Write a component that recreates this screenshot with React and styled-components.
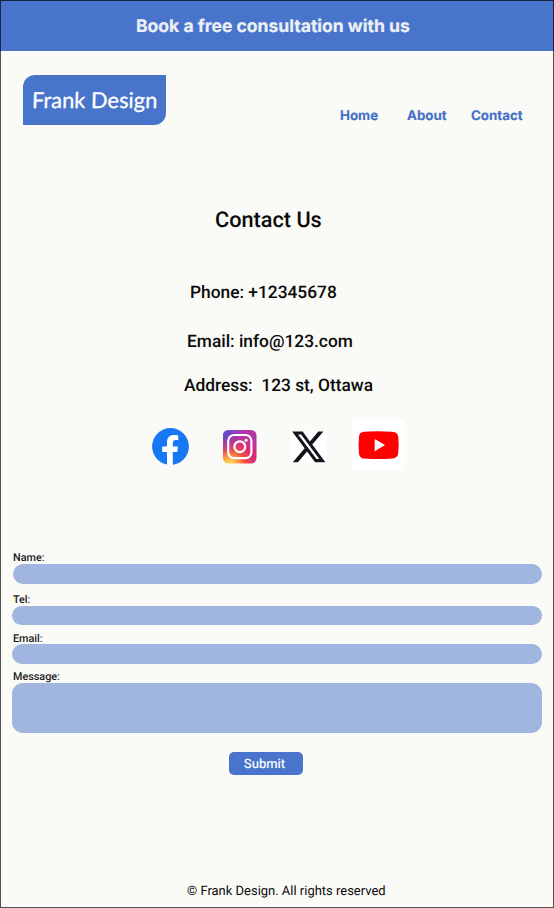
import React from "react";
import styled, { createGlobalStyle } from "styled-components";

const GlobalStyle = createGlobalStyle`
  * { box-sizing: border-box; }
  body { margin: 0; background: #fafbf6; }
`;

const Page = styled.div`
  position: relative;
  display: flex;
  flex-direction: column;
  width: 554px;
  height: 908px;
  overflow: hidden;
  background: #fafbf6;
  color: #0a0a0a;
  font-family: Roboto, sans-serif;
  text-rendering: geometricPrecision;

  &::after {
    content: "";
    position: absolute;
    inset: 0;
    border: 1px solid rgba(0, 0, 0, 0.68);
    pointer-events: none;
  }
`;

const Banner = styled.div`
  flex: none;
  height: 51px;
  padding: 1px 0 0 136px;
  background: #4874cb;
  color: #ecf0f4;
  font: 700 17.55px/52px Inter, sans-serif;
  -webkit-text-stroke: 0.2px #ecf0f4;
  white-space: nowrap;
`;

const Header = styled.header`
  flex: none;
  display: flex;
  justify-content: space-between;
  align-items: flex-end;
  height: 74px;
  padding: 0 31px 0 23px;
`;

const Logo = styled.div`
  width: 143px;
  height: 50px;
  padding-left: 9px;
  border-radius: 12px 0 12px 0;
  background: #4874cb;
  color: #fff;
  font: 400 21.9px/49px Lato, sans-serif;
  -webkit-text-stroke: 0.3px #fff;
  white-space: nowrap;
`;

const Wordmark = styled.span`
  display: inline-block;
  transform: skewX(-1.5deg);
`;

const Nav = styled.nav`
  display: flex;
  width: 183px;
`;

const NavLink = styled.a`
  width: ${(p) => p.$width}px;
  height: 20px;
  color: #4470c9;
  font: 700 13.3px/22px Inter, sans-serif;
  -webkit-text-stroke: 0.15px #4470c9;
  white-space: nowrap;
`;

const Contact = styled.section`
  flex: none;
  display: flex;
  flex-direction: column;
  height: 295px;
  padding-top: 81px;
`;

const Title = styled.h1`
  margin: 0 0 45px 215px;
  font-size: 21.7px;
  font-weight: 500;
  line-height: 30px;
`;

const ContactLine = styled.p`
  margin: 0 0 ${(p) => p.$gap}px ${(p) => p.$left}px;
  font-size: 17.33px;
  font-weight: 500;
  line-height: 24px;
  white-space: pre;
`;

const Socials = styled.div`
  display: flex;
  align-items: center;
  height: 50px;
  margin: 22px 0 0 152px;
`;

const SocialIcon = styled.svg`
  flex: none;
  display: block;
  margin-right: ${(p) => p.$gap || 0}px;
  margin-top: ${(p) => p.$drop || 0}px;
`;

const Form = styled.form`
  flex: none;
  display: flex;
  flex-direction: column;
  padding: 130px 12px 0 12px;
`;

const Field = styled.label`
  display: flex;
  flex-direction: column;
  height: ${(p) => p.$height}px;
`;

const Label = styled.span`
  height: ${(p) => p.$height}px;
  padding-left: 1px;
  color: #1c1c1c;
  font-size: 10.8px;
  font-weight: 500;
  line-height: 15px;
`;

const Input = styled.input`
  width: ${(p) => (p.$inset ? 528.6 : 529.6)}px;
  height: 19.6px;
  margin: 0 0 0 ${(p) => (p.$inset ? 1 : 0)}px;
  border: 0;
  border-radius: 10px;
  background: #a0b6e0;
`;

const TextArea = styled.textarea`
  width: 529.6px;
  height: 50px;
  margin: 0;
  border: 0;
  border-radius: 11px;
  background: #a0b6e0;
  resize: none;
`;

const Submit = styled.button`
  width: 74px;
  height: 23px;
  margin: 0 0 0 217px;
  padding: 2px 3px 0 0;
  border: 0;
  border-radius: 5px;
  background: #4874cb;
  color: #f4f7fc;
  font: 500 13px/21px Roboto, sans-serif;
  text-rendering: geometricPrecision;
`;

const Footer = styled.footer`
  margin: auto 0 6px 187px;
  font-size: 12.97px;
  line-height: 20px;
  white-space: nowrap;
`;

export default function App() {
  return (
    <>
      <GlobalStyle />
      <Page>
        <Banner>Book a free consultation with us</Banner>
        <Header>
          <Logo><Wordmark>Frank Design</Wordmark></Logo>
          <Nav>
            <NavLink $width={67}>Home</NavLink>
            <NavLink $width={64}>About</NavLink>
            <NavLink $width={52}>Contact</NavLink>
          </Nav>
        </Header>
        <Contact>
          <Title>Contact Us</Title>
          <ContactLine $left={190} $gap={25}>Phone: +12345678</ContactLine>
          <ContactLine $left={187} $gap={20}>Email: info@123.com</ContactLine>
          <ContactLine $left={184} $gap={0}>{"Address:  123 st, Ottawa"}</ContactLine>
          <Socials>
            <SocialIcon $gap={34} $drop={3} width="37" height="37" viewBox="0 0 37 37">
              <circle cx="18.5" cy="18.5" r="18.4" fill="#1877f2" />
              <path fill="#fff" d="M15 37V23.9h-4.8v-5.3H15v-4.2c0-4.8 2.8-7.3 7-7.3 2.1 0 4.2.4 4.2.4v4.6h-2.4c-2.3 0-3 1.4-3 2.9v3.6h5.2l-.8 5.3h-4.4V37z" />
            </SocialIcon>
            <SocialIcon $gap={34} $drop={4} width="34" height="34" viewBox="0 0 34 34">
              <defs>
                <radialGradient id="warm" cx="0.2" cy="1.05" r="1.05">
                  <stop offset="0" stopColor="#ffdd65" />
                  <stop offset="0.15" stopColor="#ffc04f" />
                  <stop offset="0.42" stopColor="#f4553f" />
                  <stop offset="0.7" stopColor="#dc2c78" />
                  <stop offset="1" stopColor="#b534a8" />
                </radialGradient>
                <radialGradient id="cool" cx="0" cy="0" r="0.75">
                  <stop offset="0" stopColor="#4757d8" />
                  <stop offset="0.4" stopColor="#6e45cc" stopOpacity="0.75" />
                  <stop offset="1" stopColor="#a03ac0" stopOpacity="0" />
                </radialGradient>
              </defs>
              <rect width="33.5" height="33.5" rx="5.5" fill="url(#warm)" />
              <rect width="33.5" height="33.5" rx="5.5" fill="url(#cool)" />
              <rect x="5.2" y="5" width="23.2" height="23.2" rx="6" fill="none" stroke="#fff" strokeWidth="2.2" />
              <circle cx="16.8" cy="16.7" r="5.4" fill="none" stroke="#fff" strokeWidth="2.2" />
              <circle cx="23.1" cy="10.2" r="1.5" fill="#fff" />
            </SocialIcon>
            <SocialIcon $gap={25} $drop={4} width="36" height="32" viewBox="0 0 36 32">
              <rect width="36" height="32" fill="#fff" />
              <path transform="translate(-0.8 0.2) scale(1.54 1.57)" fill="#11151b" d="M18.244.25h3.308l-7.227 8.26 8.502 11.24H16.17l-5.214-6.817L4.99 19.75H1.68l7.73-8.835L1.254.25H8.08l4.713 6.231zm-1.161 17.52h1.833L7.084 2.126H5.117z" />
            </SocialIcon>
            <SocialIcon width="52" height="50" viewBox="0 0 52 50">
              <rect width="52" height="50" fill="#fff" />
              <path fill="#f00" d="M12 11.7Q26 10.7 40 11.7Q45.5 12 46.2 16.5Q47.2 25 46.2 33.5Q45.5 38.2 40 38.6Q26 39.6 12 38.6Q7.5 38.2 7 33.5Q6.2 25 7 16.5Q7.5 12 12 11.7Z" />
              <path fill="#fff" d="M22.7 19v12.2L33 25.1z" />
            </SocialIcon>
          </Socials>
        </Contact>
        <Form>
          <Field $height={42}><Label $height={14}>Name:</Label><Input $inset /></Field>
          <Field $height={38.6}><Label $height={13.6}>Tel:</Label><Input /></Field>
          <Field $height={38.4}><Label $height={13.4}>Email:</Label><Input /></Field>
          <Field $height={83}><Label $height={14}>Message:</Label><TextArea /></Field>
          <Submit type="button">Submit</Submit>
        </Form>
        <Footer>© Frank Design. All rights reserved</Footer>
      </Page>
    </>
  );
}
